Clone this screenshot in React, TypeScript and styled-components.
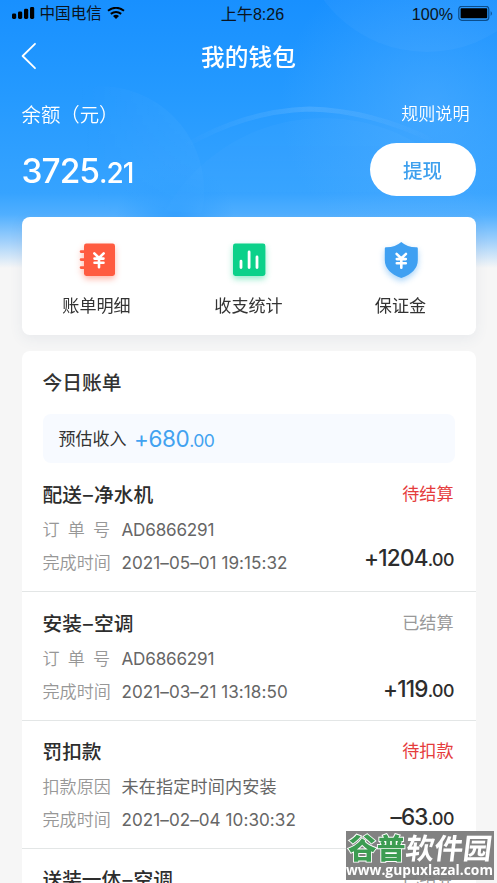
import React from "react";
import styled, { createGlobalStyle } from "styled-components";

const GlobalStyle = createGlobalStyle`
  * { box-sizing: border-box; }
  html, body { margin: 0; padding: 0; overflow: hidden; background: #f6f6f6; }
  body { font-family: Inter, "Noto Sans CJK SC", sans-serif; }
`;

const Screen = styled.main`
  position: relative;
  width: 497px;
  height: 883px;
  overflow: hidden;
  background: #f6f6f6;
`;

const Header = styled.header`
  position: relative;
  height: 217px;
  color: #fff;
`;

const Backdrop = styled.svg`
  position: absolute;
  left: 0;
  top: 0;
`;

const StatusBar = styled.div`
  position: relative;
  display: grid;
  grid-template-columns: 1fr auto 1fr;
  align-items: center;
  height: 28px;
  padding: 0 4px 0 12px;
  color: #0a1420;
  font-family: "Liberation Sans", "Noto Sans CJK SC", sans-serif;
  font-size: 16.1px;
  line-height: 28px;
`;

const StatusGroup = styled.div<{ $end?: boolean }>`
  display: flex;
  align-items: center;
  justify-content: ${(p) => (p.$end ? "flex-end" : "flex-start")};
  gap: 5px;
`;

const Carrier = styled.span`
  margin-left: -0.5px;
  font-size: 15.6px;
`;

const NavBar = styled.nav`
  position: relative;
  display: grid;
  grid-template-columns: 60px 1fr 60px;
  align-items: center;
  height: 56px;
  padding-left: 21px;
  padding-right: 21px;
`;

const NavTitle = styled.h1`
  margin: 0;
  padding-top: 3px;
  text-align: center;
  font-size: 23.7px;
  font-weight: 500;
  line-height: 53px;
`;

const Balance = styled.section`
  position: relative;
  display: flex;
  justify-content: space-between;
  padding: 12px 21.5px 0 21.5px;
`;

const BalanceColumn = styled.div<{ $end?: boolean }>`
  display: flex;
  flex-direction: column;
  align-items: ${(p) => (p.$end ? "flex-end" : "flex-start")};
`;

const BalanceLabel = styled.div`
  height: 36px;
  font-size: 19.4px;
  line-height: 38px;
  font-weight: 350;
`;

const RulesLink = styled.a`
  height: 47px;
  padding-right: 6px;
  font-size: 17.1px;
  line-height: 36px;
  font-weight: 350;
`;

const BalanceValue = styled.div`
  margin-top: 14px;
  font-size: 33.5px;
  font-weight: 550;
  line-height: 51px;
  letter-spacing: -1px;

  small { font-size: 28px; letter-spacing: -1px; }
`;

const WithdrawButton = styled.button`
  width: 106px;
  height: 53px;
  padding: 3px 0 0;
  border: 0;
  border-radius: 27px;
  background: #fff;
  color: #3ea0ee;
  font: 500 19.5px/50px Inter, "Noto Sans CJK SC", sans-serif;
`;

const Card = styled.section`
  position: relative;
  width: 454px;
  margin-left: 21.5px;
  border-radius: 8px;
  background: #fff;
`;

const ShortcutCard = styled(Card)`
  display: flex;
  justify-content: space-between;
  height: 118px;
  padding: 20px 24px 0 24px;
  box-shadow: 0 4px 14px rgba(60, 90, 130, 0.08);
`;

const Shortcut = styled.div`
  display: flex;
  flex-direction: column;
  align-items: center;
  width: 102px;
  color: #333;
  font-size: 17.1px;
  line-height: 30px;

  svg { display: block; overflow: visible; margin-bottom: 14px; }
`;

const BillCard = styled(Card)`
  margin-top: 16px;
  height: 560px;
  padding-top: 17px;
`;

const BillTitle = styled.h2`
  margin: 0 21px;
  color: #333;
  font-size: 19.8px;
  font-weight: 500;
  line-height: 30px;
`;

const Estimate = styled.div`
  display: flex;
  align-items: center;
  gap: 7.5px;
  height: 49px;
  margin: 16px 21px 0;
  padding: 2px 0 0 16px;
  border-radius: 8px;
  background: #f7faff;
  color: #333;
  font-size: 17px;
  line-height: 47px;
`;

const EstimateAmount = styled.span`
  color: #42a2f0;
  font-size: 22.5px;
  letter-spacing: -0.4px;

  small { font-size: 17.6px; letter-spacing: -0.7px; }
`;

const Item = styled.article<{ $first?: boolean }>`
  height: ${(p) => (p.$first ? "129.3px" : "128.4px")};
  padding: ${(p) => (p.$first ? "14.8px" : "14.3px")} 21px 0;
  border-bottom: 1px solid #e3e6e6;
`;

const ItemRow = styled.div`
  display: flex;
  justify-content: space-between;
  height: 35px;
  line-height: 35px;
`;

const ItemTitle = styled.h3`
  margin: 0;
  color: #2d2d2d;
  font-size: 19.7px;
  font-weight: 500;
`;

const TitleDash = styled.span`
  margin: 0 1.2px;
`;

const Status = styled.span<{ $tone: "red" | "gray" }>`
  padding-right: 1px;
  color: ${(p) => (p.$tone === "red" ? "#e53c3c" : "#999")};
  font-size: 17.1px;
  line-height: 32px;
`;

const Facts = styled.dl`
  display: grid;
  grid-template-columns: 79px auto;
  grid-auto-rows: 33px;
  margin: 0;
  font-size: 17.1px;
  line-height: 33px;
`;

const FactName = styled.dt<{ $spread?: boolean }>`
  color: #979797;
  font-weight: 350;
  letter-spacing: ${(p) => (p.$spread ? "8.1px" : "0")};
`;

const FactValue = styled.dd<{ $kind: "code" | "date" | "text" }>`
  margin: 0;
  color: #666;
  letter-spacing: ${(p) => ({ code: "-0.2px", date: "0.05px", text: "0.15px" })[p.$kind]};
  white-space: nowrap;
`;

const ItemBody = styled.div`
  display: flex;
  justify-content: space-between;
`;

const Amount = styled.div<{ $top: number }>`
  padding-top: ${(p) => p.$top}px;
  padding-right: 0.5px;
  color: #2d2d2d;
  font-size: 22.5px;
  font-weight: 500;
  line-height: 30px;
  letter-spacing: -0.8px;
  white-space: nowrap;

  small { font-size: 17.8px; letter-spacing: -0.5px; }
`;

const Watermark = styled.div`
  position: absolute;
  left: 346px;
  top: 831px;
  width: 148px;
  height: 49px;
  background: rgba(123, 123, 123, 0.95);
  color: #fff;
  white-space: nowrap;
`;

const WatermarkName = styled.div`
  height: 31px;
  padding-left: 2px;
  font: 900 28.8px/31px "Noto Sans CJK SC", sans-serif;

  span {
    color: #3c9c52;
    -webkit-text-stroke: 1.8px #fff;
    paint-order: stroke fill;
  }

  em {
    display: inline-block;
    font-style: normal;
    font-weight: 700;
    transform: skewX(-7deg);
  }
`;

const WatermarkUrl = styled.div`
  font: 700 13.8px/16px "Open Sans", sans-serif;
`;

function HeaderBackdrop() {
  return (
    <Backdrop width="497" height="268" viewBox="0 0 497 268">
      <defs>
        <linearGradient id="sky" x1="0" y1="0" x2="0" y2="1">
          <stop offset="0" stopColor="#1890ff" />
          <stop offset="0.37" stopColor="#259aff" />
          <stop offset="0.72" stopColor="#36a3ff" />
          <stop offset="0.8" stopColor="#50afff" />
          <stop offset="0.9" stopColor="#a0d0fb" />
          <stop offset="1" stopColor="#f6f6f6" />
        </linearGradient>
        <radialGradient id="glow" cx="430" cy="105" r="150" gradientUnits="userSpaceOnUse">
          <stop offset="0" stopColor="#63b5ff" stopOpacity="0.4" />
          <stop offset="1" stopColor="#63b5ff" stopOpacity="0" />
        </radialGradient>
        <radialGradient id="deep" cx="175" cy="222" r="60" gradientUnits="userSpaceOnUse">
          <stop offset="0" stopColor="#2b9dff" stopOpacity="0.8" />
          <stop offset="1" stopColor="#2b9dff" stopOpacity="0" />
        </radialGradient>
        <linearGradient id="disc" x1="0" y1="0" x2="1" y2="0">
          <stop offset="0.4" stopColor="#fff" stopOpacity="0" />
          <stop offset="1" stopColor="#fff" stopOpacity="0.09" />
        </linearGradient>
        <linearGradient id="ring" x1="180" y1="0" x2="440" y2="0" gradientUnits="userSpaceOnUse">
          <stop offset="0" stopColor="#fff" stopOpacity="0" />
          <stop offset="0.5" stopColor="#fff" stopOpacity="0.12" />
          <stop offset="1" stopColor="#fff" stopOpacity="0" />
        </linearGradient>
        <linearGradient id="fade" x1="0" y1="0" x2="0" y2="1">
          <stop offset="0" stopColor="#fff" />
          <stop offset="1" stopColor="#000" />
        </linearGradient>
        <mask id="discMask">
          <rect width="497" height="230" fill="url(#fade)" />
        </mask>
      </defs>
      <rect width="497" height="268" fill="url(#sky)" />
      <rect width="497" height="217" fill="url(#glow)" />
      <rect y="150" width="400" height="118" fill="url(#deep)" />
      <circle cx="427" cy="-77" r="129" fill="#fff" opacity="0.035" />
      <g mask="url(#discMask)">
        <circle cx="100" cy="190" r="104" fill="url(#disc)" />
        <circle cx="324" cy="300" r="182" fill="#fff" opacity="0.06" />
      </g>
      <path d="M185 146 Q245 111 309 109 Q370 110 434 141" fill="none" stroke="url(#ring)" strokeWidth="5" />
    </Backdrop>
  );
}

function SignalIcon() {
  return (
    <svg width="23" height="14" viewBox="0 0 23 14" fill="#000">
      <rect x="0" y="6.4" width="4.2" height="5.5" rx="1.4" />
      <rect x="6" y="4.4" width="4.2" height="7.5" rx="1.4" />
      <rect x="12" y="1.8" width="4.2" height="10.1" rx="1.4" />
      <rect x="18" y="0" width="4.2" height="11.9" rx="1.4" />
    </svg>
  );
}

function WifiIcon() {
  return (
    <svg width="18" height="14" viewBox="0 0 18 14" fill="none" stroke="#000" strokeWidth="2">
      <path d="M1 3.8 Q9 -2.2 17 3.8" />
      <path d="M3.8 6.9 Q9 3 14.2 6.9" />
      <path d="M6 9 Q9 6.7 12 9 L9 12Z" fill="#000" stroke="none" />
    </svg>
  );
}

function BatteryIcon() {
  return (
    <svg width="35" height="16" viewBox="0 0 35 16">
      <rect x="0.8" y="0.3" width="30" height="14" rx="3" fill="none" stroke="#0a4d8c" strokeWidth="1.2" />
      <rect x="2.6" y="2.3" width="26.6" height="10" rx="0.8" fill="#000" />
      <path d="M32.7 5 Q35 7.5 32.7 9.9Z" fill="#0a4d8c" />
    </svg>
  );
}

function BackIcon() {
  return (
    <svg width="16" height="28" viewBox="0 0 16 28" fill="none" stroke="#fff" strokeWidth="1.8">
      <path d="M14 1.8 L1.6 14 L14 26.2" strokeLinecap="round" strokeLinejoin="round" />
    </svg>
  );
}

const YEN = "M-4.7 -6.5 L0 -1.8 L4.7 -6.5 M0 -1.8 V7.5 M-4.5 -1.2 H4.5 M-4.5 3 H4.5";

function LedgerIcon() {
  return (
    <svg width="38" height="40" viewBox="0 0 38 40">
      <g filter="drop-shadow(0 3px 3px rgba(255,93,65,.45))">
        <rect x="6" y="6.5" width="31" height="32.5" rx="2.4" fill="#ff5b40" />
        <path d="M3 14.6 H8 M3 22.6 H8 M3 30.6 H8" stroke="#ff5b40" strokeWidth="2.6" strokeLinecap="round" />
      </g>
      <path d={YEN} transform="translate(21 22.8)" fill="none" stroke="#fff" strokeWidth="2.6" strokeLinecap="round" />
    </svg>
  );
}

function ChartIcon() {
  return (
    <svg width="38" height="40" viewBox="0 0 38 40">
      <rect x="3" y="6.5" width="32.4" height="32.5" rx="2.4" fill="#0bd18a" filter="drop-shadow(0 3px 3px rgba(11,209,138,.45))" />
      <path d="M11 24.2 V30.6 M19.1 15 V30.6 M27 20 V30.6" stroke="#fff" strokeWidth="2.8" strokeLinecap="round" />
    </svg>
  );
}

function ShieldIcon() {
  return (
    <svg width="38" height="40" viewBox="0 0 38 40">
      <path
        d="M19.3 5 Q25.5 10.5 34.5 10.3 Q35.8 10.3 35.8 11.5 V23 Q35.8 35 19.3 41 Q2.8 35 2.8 23 V11.5 Q2.8 10.3 4.1 10.3 Q13 10.5 19.3 5Z"
        fill="#3fa0f2"
        filter="drop-shadow(0 3px 3px rgba(63,160,242,.45))"
      />
      <path d={YEN} transform="translate(19.3 23.3)" fill="none" stroke="#fff" strokeWidth="2.6" strokeLinecap="round" />
    </svg>
  );
}

type Fact = { name: string; value: string; kind: "code" | "date" | "text" };

type Bill = {
  title: string[];
  status: string;
  tone: "red" | "gray";
  facts: Fact[];
  whole: string;
  cents: string;
  top: number;
};

const bills: Bill[] = [
  {
    title: ["配送", "净水机"],
    status: "待结算",
    tone: "red",
    facts: [
      { name: "订单号", value: "AD6866291", kind: "code" },
      { name: "完成时间", value: "2021–05–01 19:15:32", kind: "date" },
    ],
    whole: "+1204",
    cents: ".00",
    top: 30,
  },
  {
    title: ["安装", "空调"],
    status: "已结算",
    tone: "gray",
    facts: [
      { name: "订单号", value: "AD6866291", kind: "code" },
      { name: "完成时间", value: "2021–03–21 13:18:50", kind: "date" },
    ],
    whole: "+119",
    cents: ".00",
    top: 32.5,
  },
  {
    title: ["罚扣款"],
    status: "待扣款",
    tone: "red",
    facts: [
      { name: "扣款原因", value: "未在指定时间内安装", kind: "text" },
      { name: "完成时间", value: "2021–02–04 10:30:32", kind: "date" },
    ],
    whole: "–63",
    cents: ".00",
    top: 32,
  },
  { title: ["送装一体", "空调"], status: "已结算", tone: "gray", facts: [], whole: "", cents: "", top: 0 },
];

function BillItem({ bill, first }: { bill: Bill; first: boolean }) {
  return (
    <Item $first={first}>
      <ItemRow>
        <ItemTitle>
          {bill.title[0]}
          {bill.title[1] && <TitleDash>–</TitleDash>}
          {bill.title[1]}
        </ItemTitle>
        <Status $tone={bill.tone}>{bill.status}</Status>
      </ItemRow>
      <ItemBody>
        <Facts>
          {bill.facts.map((fact) => (
            <React.Fragment key={fact.name}>
              <FactName $spread={fact.kind === "code"}>{fact.name}</FactName>
              <FactValue $kind={fact.kind}>{fact.value}</FactValue>
            </React.Fragment>
          ))}
        </Facts>
        <Amount $top={bill.top}>
          {bill.whole}
          <small>{bill.cents}</small>
        </Amount>
      </ItemBody>
    </Item>
  );
}

export default function App() {
  return (
    <Screen>
      <GlobalStyle />
      <Header>
        <HeaderBackdrop />
        <StatusBar>
          <StatusGroup>
            <SignalIcon />
            <Carrier>中国电信</Carrier>
            <WifiIcon />
          </StatusGroup>
          <span>上午8:26</span>
          <StatusGroup $end>
            <span>100%</span>
            <BatteryIcon />
          </StatusGroup>
        </StatusBar>
        <NavBar>
          <BackIcon />
          <NavTitle>我的钱包</NavTitle>
        </NavBar>
        <Balance>
          <BalanceColumn>
            <BalanceLabel>余额（元）</BalanceLabel>
            <BalanceValue>
              3725<small>.21</small>
            </BalanceValue>
          </BalanceColumn>
          <BalanceColumn $end>
            <RulesLink>规则说明</RulesLink>
            <WithdrawButton>提现</WithdrawButton>
          </BalanceColumn>
        </Balance>
      </Header>
      <ShortcutCard>
        <Shortcut>
          <LedgerIcon />
          账单明细
        </Shortcut>
        <Shortcut>
          <ChartIcon />
          收支统计
        </Shortcut>
        <Shortcut>
          <ShieldIcon />
          保证金
        </Shortcut>
      </ShortcutCard>
      <BillCard>
        <BillTitle>今日账单</BillTitle>
        <Estimate>
          预估收入
          <EstimateAmount>
            +680<small>.00</small>
          </EstimateAmount>
        </Estimate>
        {bills.map((bill, index) => (
          <BillItem key={bill.title[0]} bill={bill} first={index === 0} />
        ))}
      </BillCard>
      <Watermark>
        <WatermarkName>
          <span>谷普</span>
          <em>软件园</em>
        </WatermarkName>
        <WatermarkUrl>www.gupuxlazal.com</WatermarkUrl>
      </Watermark>
    </Screen>
  );
}
